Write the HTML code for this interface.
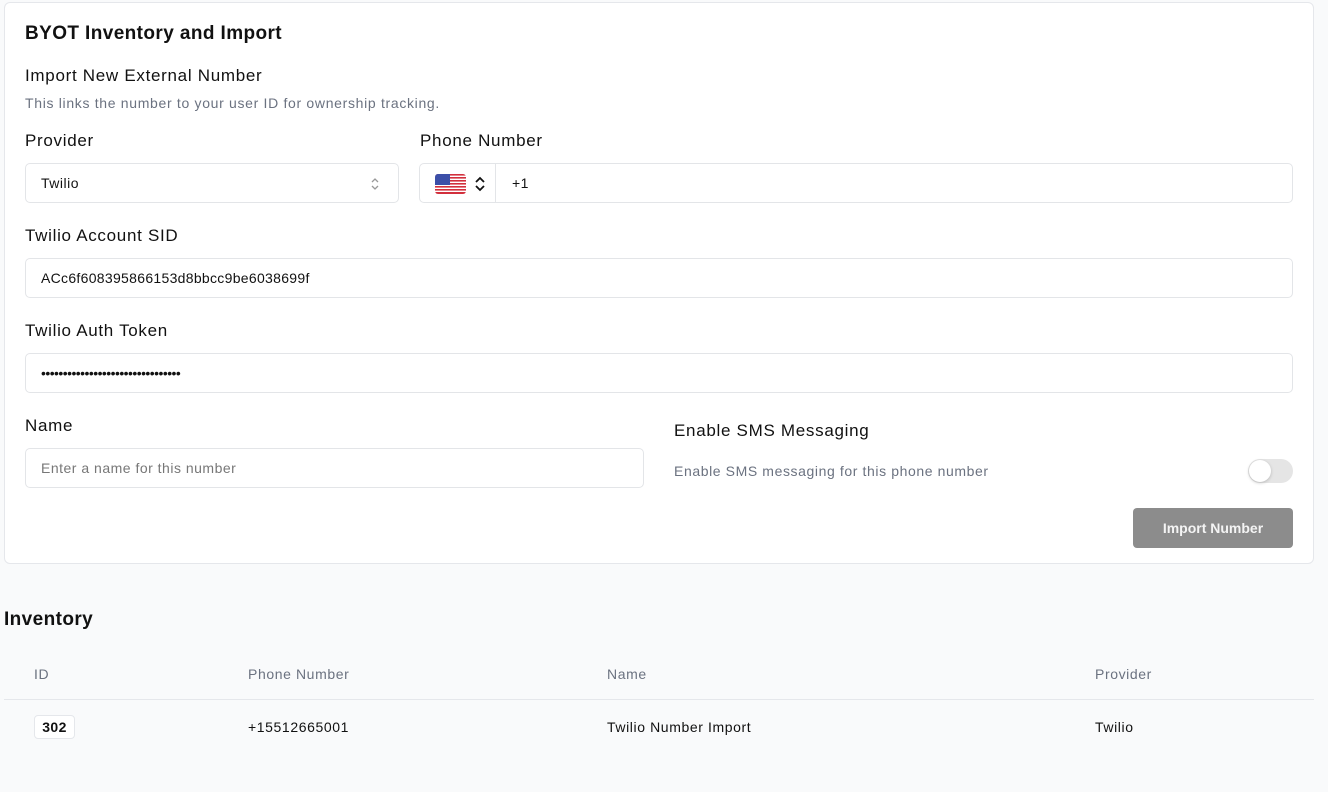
<!DOCTYPE html>
<html><head><meta charset="utf-8"><style>
*{box-sizing:border-box;margin:0;padding:0}
body{width:1328px;height:792px;background:#f9fafb;font-family:"Liberation Sans",sans-serif;color:#111;position:relative;overflow:hidden}
.a{position:absolute}
.card{left:4px;top:2px;width:1310px;height:562px;background:#fff;border:1px solid #e5e7eb;border-radius:6px}
.lbl{font-size:17px;color:#111;letter-spacing:0.7px}
.inp{height:40px;border:1px solid #e3e5e8;border-radius:5px;background:#fff;font-size:14px;padding-left:15px;line-height:39px;letter-spacing:0.5px}
.gray{color:#6b7280}
.s{font-size:14px;letter-spacing:0.6px}
</style></head><body>
<div class="a card"></div>
<div class="a" style="left:25px;top:23px;font-size:19px;font-weight:bold;letter-spacing:0.4px">BYOT Inventory and Import</div>
<div class="a lbl" style="left:25px;top:66px">Import New External Number</div>
<div class="a gray s" style="left:25px;top:95px;letter-spacing:0.68px">This links the number to your user ID for ownership tracking.</div>
<div class="a lbl" style="left:25px;top:131px">Provider</div>
<div class="a lbl" style="left:420px;top:131px">Phone Number</div>
<div class="a inp" style="left:25px;top:163px;width:374px">Twilio
<svg class="a" style="right:18px;top:13px" width="10" height="14" viewBox="0 0 10 14"><path d="M2 5l3-3 3 3M2 9l3 3 3-3" fill="none" stroke="#999" stroke-width="1.3"/></svg></div>
<div class="a inp" style="left:419px;top:163px;width:874px;padding-left:0">
<div class="a" style="left:0;top:0;width:76px;height:38px;border-right:1px solid #e3e5e8"></div>
<svg class="a" style="left:15px;top:10px" width="31" height="20" viewBox="0 0 31 20"><clipPath id="c"><rect width="31" height="20" rx="3"/></clipPath><g clip-path="url(#c)"><rect width="31" height="20" fill="#fff"/><g fill="#d22f3c"><rect y="0" width="31" height="1.6"/><rect y="3" width="31" height="1.6"/><rect y="6" width="31" height="1.6"/><rect y="9" width="31" height="1.6"/><rect y="12" width="31" height="1.6"/><rect y="15" width="31" height="1.6"/><rect y="18" width="31" height="2"/></g><rect width="15" height="11" fill="#3c4fa8"/></g></svg>
<svg class="a" style="left:54px;top:11px" width="12" height="18" viewBox="0 0 12 18"><path d="M2 7l4-4 4 4M2 11l4 4 4-4" fill="none" stroke="#111" stroke-width="1.8"/></svg>
<span class="a" style="left:92px;top:0">+1</span></div>
<div class="a lbl" style="left:25px;top:226px">Twilio Account SID</div>
<div class="a inp" style="left:25px;top:258px;width:1268px;letter-spacing:0.3px">ACc6f608395866153d8bbcc9be6038699f</div>
<div class="a lbl" style="left:25px;top:321px">Twilio Auth Token</div>
<div class="a inp" style="left:25px;top:353px;width:1268px;letter-spacing:-0.55px">••••••••••••••••••••••••••••••••</div>
<div class="a lbl" style="left:25px;top:416px">Name</div>
<div class="a inp gray" style="left:25px;top:448px;width:619px;color:#777">Enter a name for this number</div>
<div class="a lbl" style="left:674px;top:421px">Enable SMS Messaging</div>
<div class="a gray s" style="left:674px;top:463px">Enable SMS messaging for this phone number</div>
<div class="a" style="left:1248px;top:459px;width:45px;height:24px;border-radius:12px;background:#e5e5e5"></div>
<div class="a" style="left:1249px;top:460px;width:22px;height:22px;border-radius:11px;background:#fff;box-shadow:0 1px 3px rgba(0,0,0,.2)"></div>
<div class="a" style="left:1133px;top:508px;width:160px;height:40px;border-radius:4px;background:#8c8c8c;color:#f4f4f4;font-size:14px;font-weight:bold;text-align:center;line-height:40px">Import Number</div>
<div class="a" style="left:4px;top:609px;font-size:19px;font-weight:bold;letter-spacing:0.4px">Inventory</div>
<div class="a gray s" style="left:34px;top:666px">ID</div>
<div class="a gray s" style="left:248px;top:666px">Phone Number</div>
<div class="a gray s" style="left:607px;top:666px">Name</div>
<div class="a gray s" style="left:1095px;top:666px">Provider</div>
<div class="a" style="left:4px;top:699px;width:1310px;height:1px;background:#e5e7eb"></div>
<div class="a" style="left:34px;top:715px;width:41px;height:24px;border:1px solid #e5e7eb;border-radius:4px;background:#fff;font-size:14px;font-weight:bold;text-align:center;line-height:22px;letter-spacing:0.4px">302</div>
<div class="a s" style="left:248px;top:719px">+15512665001</div>
<div class="a s" style="left:607px;top:719px">Twilio Number Import</div>
<div class="a s" style="left:1095px;top:719px">Twilio</div>
</body></html>
